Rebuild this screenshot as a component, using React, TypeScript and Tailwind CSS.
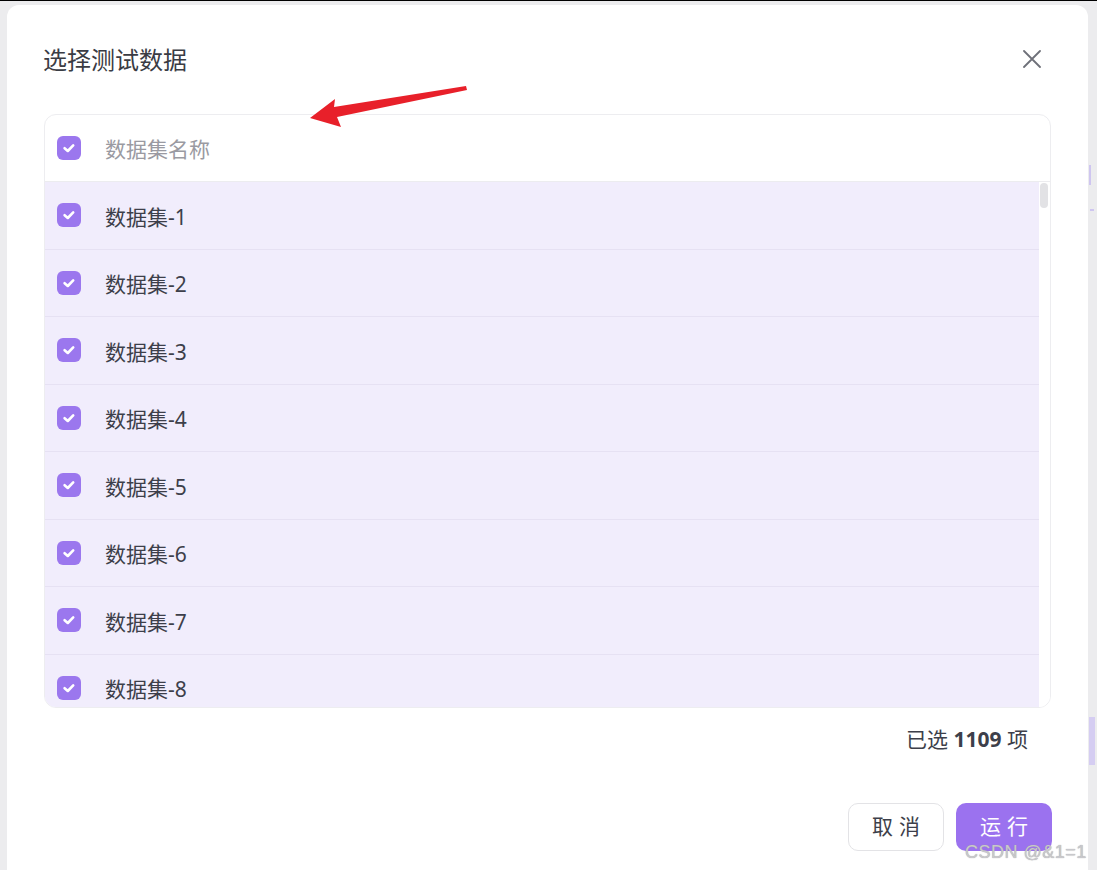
import React from "react";

const font = { fontFamily: '"Noto Sans", "Noto Sans CJK SC", sans-serif' };

function Check() {
  return (
    <div className="w-[24px] h-[24px] rounded-[6px] bg-[#9b77ee] flex items-center justify-center shrink-0">
      <svg width="16" height="16" viewBox="0 0 16 16" fill="none">
        <path d="M3.6 8.2 L6.8 11 L12.2 5.4" stroke="white" strokeWidth="2.6" strokeLinecap="round" strokeLinejoin="round" />
      </svg>
    </div>
  );
}

export default function App() {
  const rows = [1, 2, 3, 4, 5, 6, 7, 8];
  return (
    <div className="relative w-full h-[870px] bg-[#ececee] overflow-hidden" style={font}>
      <div className="h-[1px] bg-black" />
      <div className="absolute right-0 top-0 w-[9px] h-full">
        <div className="mt-[165px] ml-[1px] w-[2px] h-[20px] bg-[#cfc6f0]" />
        <div className="mt-[24px] ml-[2px] w-[4px] h-[2px] bg-[#cfc6f0]" />
        <div className="mt-[506px] ml-[1px] w-[6px] h-[48px] bg-[#d5cdf2]" />
      </div>
      <div className="ml-[7px] mt-[4px] w-[1081px] h-[900px] bg-white rounded-[12px] px-[37px] pt-[38px]">
        <div className="flex items-center justify-between h-[32px]">
          <div className="text-[24px] text-[#3a3c44] ml-[-1px] translate-y-[1px]">选择测试数据</div>
          <svg className="mr-[10px]" width="18" height="18" viewBox="0 0 18 18" fill="none">
            <path d="M1 1 L17 17 M17 1 L1 17" stroke="#6e7079" strokeWidth="1.8" strokeLinecap="round" />
          </svg>
        </div>
        <div className="mt-[39px] h-[594px] border border-[#ededf0] rounded-[12px] overflow-hidden flex flex-col">
          <div className="h-[67px] shrink-0 flex items-center pl-[12px] gap-[24px] border-b border-[#ececef]">
            <Check />
            <span className="text-[21px] text-[#9a9aa2] translate-y-[2px]">数据集名称</span>
          </div>
          <div className="flex flex-1 overflow-hidden">
            <div className="flex-1 overflow-hidden">
              {rows.map((n) => (
                <div
                  key={n}
                  className="h-[67.5px] shrink-0 flex items-center pl-[12px] gap-[24px] bg-[#f1edfc] border-b border-[#e6e1f3]"
                >
                  <Check />
                  <span className="text-[21px] text-[#3d3f4a] translate-y-[2px]">数据集-{n}</span>
                </div>
              ))}
            </div>
            <div className="w-[11px] shrink-0 bg-white pt-[1px] pl-[1px]">
              <div className="w-[8px] h-[25px] rounded-full bg-[#e2e2e5]" />
            </div>
          </div>
        </div>
        <div className="flex justify-end pr-[23px] mt-[16px] text-[21px] text-[#3d3f4a]">
          <span>已选&nbsp;<b className="font-bold">1109</b>&nbsp;项</span>
        </div>
        <div className="flex justify-end gap-[12px] mt-[47px]">
          <button className="w-[96px] h-[48px] rounded-[10px] border border-[#e3e3e6] bg-white text-[21px] text-[#3d3f4a] tracking-[6px] pl-[6px]">
            取消
          </button>
          <button className="w-[96px] h-[48px] rounded-[10px] bg-[#9b72ef] text-[21px] text-white tracking-[6px] pl-[6px] -mr-[1px]">
            运行
          </button>
        </div>
      </div>
      <svg className="absolute left-0 top-0 pointer-events-none" width="1097" height="870">
        <polygon
          points="310,118 335,99 334,107 466,86 467,90 337,117 341,127"
          fill="#e8202a"
        />
      </svg>
      <div
        className="absolute left-[965px] top-[839px] text-[18px] text-[#c8c8cc] tracking-[0.5px]"
        style={{ fontFamily: '"Liberation Sans", sans-serif', textShadow: "0 0 1px #999" }}
      >
        CSDN @&amp;1=1
      </div>
    </div>
  );
}
